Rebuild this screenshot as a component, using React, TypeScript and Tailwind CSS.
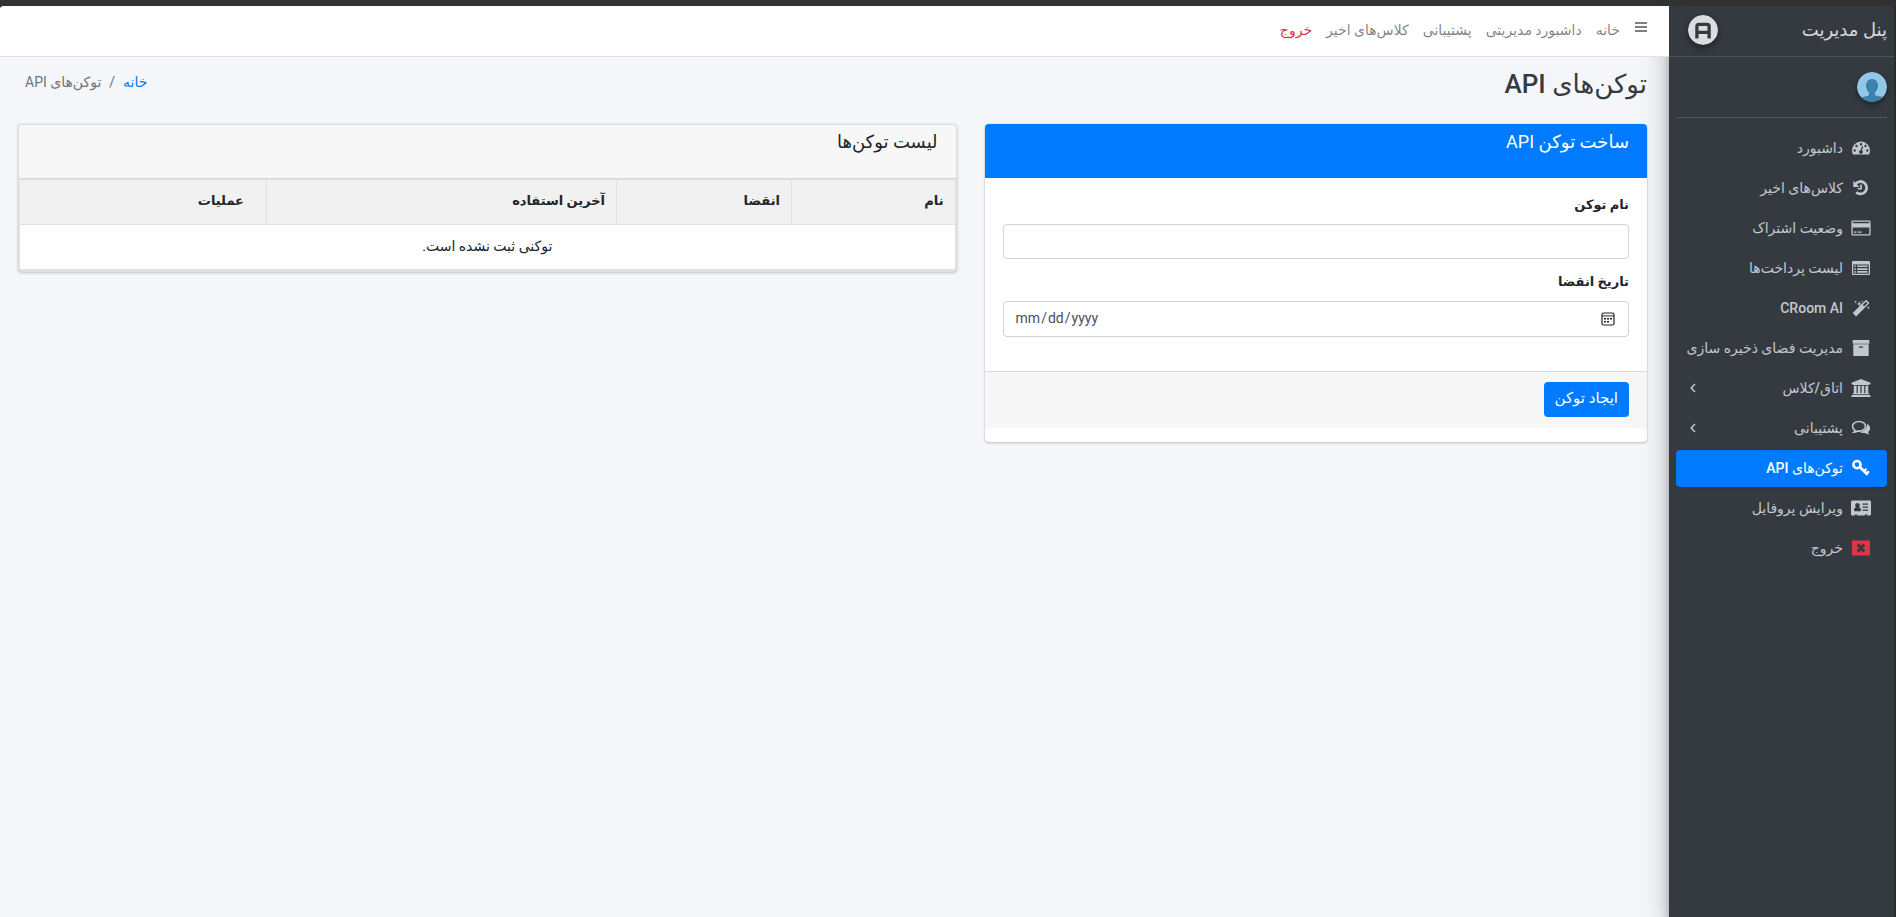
import React from 'react';

interface MenuItem {
  label: string;
  icon: React.ReactNode;
  active?: boolean;
  hasChildren?: boolean;
}

// icons share a 20x18 box and take the colour of the menu link
const icons = {
  dashboard: (
    <path fillRule="evenodd" d="M10 2.500a9 9 0 0 1 9 9c0 1.500-.400 3-1.100 4.100H2.100A8 8 0 0 1 1 11.500a9 9 0 0 1 9-9zM10 4a1.200 1.200 0 1 0 0 2.400A1.200 1.200 0 0 0 10 4zM5.500 5.800a1.200 1.200 0 1 0 0 2.400 1.200 1.200 0 0 0 0-2.400zm9 0a1.200 1.200 0 1 0 0 2.400 1.200 1.200 0 0 0 0-2.400zM3.700 10.300a1.200 1.200 0 1 0 0 2.400 1.200 1.200 0 0 0 0-2.400zm12.600 0a1.200 1.200 0 1 0 0 2.400 1.200 1.200 0 0 0 0-2.400zM10.900 7.200l-1.200 4a1.800 1.800 0 1 0 1.300.400l1.200-4z" />
  ),
  history: (
    <>
      <path d="M4.600 4.900A6.200 6.200 0 1 1 5.200 13.200" fill="none" stroke="currentColor" strokeWidth="2.800" />
      <path d="M2.300 1.700v6.200h6.200zM9.300 5.500h1.600v4.900H6.700V8.900h2.600z" />
    </>
  ),
  card: (
    <path fillRule="evenodd" d="M2 1.500h16c1 0 1.600.600 1.600 1.600v11.800c0 1-.600 1.600-1.600 1.600H2c-1 0-1.600-.600-1.600-1.600V3.100c0-1 .600-1.600 1.600-1.600zM1.700 2.700v1.500h16.600V2.700zM1.700 8.500v6.700h16.600V8.500zM3 12.500h2.500v1.300H3zm3.800 0h3.500v1.300H6.800z" />
  ),
  list: (
    <path fillRule="evenodd" d="M2.500 2h15c1 0 1.500.500 1.500 1.500v11c0 1-.500 1.500-1.500 1.500h-15c-1 0-1.500-.500-1.500-1.500v-11C1 2.500 1.500 2 2.500 2zM2.300 5.500v9.200h15.400V5.500zM3.500 6.500h1.400v1.600H3.500zm2.600 0h10.400v1.600H6.100zM3.500 9.300h1.400v1.600H3.500zm2.600 0h10.400v1.600H6.100zM3.500 12.100h1.400v1.600H3.500zm2.600 0h10.400v1.600H6.100z" />
  ),
  magic: (
    <path fillRule="evenodd" d="M15.600 1.200l2.400 2.400c.300.300.300.700 0 1L5.600 17c-.300.300-.700.300-1 0l-2.400-2.400c-.300-.300-.300-.700 0-1L14.600 1.200c.300-.300.700-.300 1 0zm-.500 1.500L11.800 6l1.400 1.400 3.300-3.300zM4.600 1.200l.400 1.300 1.300.400-1.300.400-.400 1.300-.400-1.300-1.300-.400 1.300-.400zM8.300 2l.700 2.200 2.200.700L9 5.600l-.700 2.200-.700-2.200-2.200-.700 2.200-.700zM11.300 1.200l.300 1 1 .300-1 .300-.300 1-.300-1-1-.300 1-.300zM17.300 7l.400 1.300 1.300.400-1.300.400-.400 1.300-.400-1.300-1.300-.400 1.300-.400z" />
  ),
  archive: (
    <path fillRule="evenodd" d="M2.200 1h15.600c.300 0 .500.200.500.500v3.200H1.700V1.500c0-.300.200-.500.500-.500zM2.300 5.300h15.400v10.900c0 .400-.300.700-.700.700H3c-.400 0-.700-.300-.700-.700zM8.500 7.500a.500.500 0 0 0 0 1.300h3a.500.500 0 0 0 0-1.300z" />
  ),
  bank: (
    <path d="M10 0l9.500 3.800v1.400h-1.300v.900H1.800v-.900H.500V3.800zM2.800 6.800h2.800v7.200h1.200V6.800h2.600v7.200h1.200V6.800h2.600v7.200h1.200V6.800h2.800v7.200h1v1.200H1.800V14h1zM1.200 15.900h17.600l.700.700V18H.500v-1.400z" />
  ),
  comments: (
    <>
      <path d="M8 2.500c3.700 0 6.500 2.100 6.500 4.800S11.700 12.100 8 12.100l-1.500-.100c-1 .700-2.200 1.200-3.600 1.300.600-.600 1-1.300 1.100-2.100C2.500 10.300 1.500 8.900 1.500 7.300c0-2.700 2.800-4.800 6.500-4.800z" fill="none" stroke="currentColor" strokeWidth="1.600" />
      <path d="M16 5c2 .900 3.200 2.500 3.200 4.200 0 1.500-.800 2.800-2.200 3.700.200.900.700 1.700 1.400 2.400-1.700 0-3-.500-4.200-1.400-2 .300-4.200 0-5.900-.900C13 12.700 16.300 9.500 16 5z" />
    </>
  ),
  key: (
    <g fill="none" stroke="currentColor">
      <circle cx="6" cy="5.600" r="3.600" strokeWidth="2.600" />
      <path d="M8.500 7.800l8.200 8" strokeWidth="2.800" />
      <path d="M13 12.200l2.400-2.400M15.600 14.600l2.300-2.300" strokeWidth="2.200" />
    </g>
  ),
  profile: (
    <path fillRule="evenodd" d="M1.500 1.500h17c.900 0 1.500.600 1.500 1.500v12c0 .900-.600 1.500-1.500 1.500h-2.300v-1h-2.400v1H6.200v-1H3.800v1H1.500C.600 16.500 0 15.900 0 15V3c0-.900.600-1.500 1.500-1.500zM6.500 4a2.300 2.300 0 0 0-1.300 4.200C3.700 8.500 3 9.700 3 11.300c0 .500.300.900.900.900h5.200c.600 0 .900-.400.900-.900 0-1.600-.700-2.800-2.200-3.100A2.300 2.300 0 0 0 6.500 4zM11.500 4.500v1.200H17V4.500zm0 3v1.200H17V7.500zm0 3v1.200H17v-1.200z" />
  ),
  close: (
    <path fill="#dc3545" fillRule="evenodd" d="M2 1.500h16c.600 0 1 .400 1 1v13c0 .600-.400 1-1 1H2c-.600 0-1-.400-1-1v-13c0-.600.400-1 1-1zM7.800 4.500L5.700 6.600 8.100 9l-2.400 2.400 2.100 2.100 2.200-2.300 2.200 2.300 2.100-2.100L11.900 9l2.400-2.400-2.100-2.100L10 6.800z" />
  ),
};

const menuItems: MenuItem[] = [
  { label: 'داشبورد', icon: icons.dashboard },
  { label: 'کلاس‌های اخیر', icon: icons.history },
  { label: 'وضعیت اشتراک', icon: icons.card },
  { label: 'لیست پرداخت‌ها', icon: icons.list },
  { label: 'CRoom AI', icon: icons.magic },
  { label: 'مدیریت فضای ذخیره سازی', icon: icons.archive },
  { label: 'اتاق/کلاس', icon: icons.bank, hasChildren: true },
  { label: 'پشتیبانی', icon: icons.comments, hasChildren: true },
  { label: 'توکن‌های API', icon: icons.key, active: true },
  { label: 'ویرایش پروفایل', icon: icons.profile },
  { label: 'خروج', icon: icons.close },
];

const navLinks = ['خانه', 'داشبورد مدیریتی', 'پشتیبانی', 'کلاس‌های اخیر'];

const Sidebar = () => (
  <aside className="relative z-10 flex w-[227px] shrink-0 flex-col border-r-2 border-[#2b2b29] bg-[#343a40] text-[#c2c7d0] shadow-[0_12px_26px_rgba(0,0,0,0.25),0_9px_9px_rgba(0,0,0,0.22)]">
    <a href="#" className="flex h-[51px] items-center justify-between border-b border-[#4b545c] pr-[7px] pb-0.5 pl-[19px] text-lg text-white/80">
      <span>پنل مدیریت</span>
      <svg viewBox="0 0 32 32" className="size-[30px] rounded-full shadow-[0_3px_6px_rgba(0,0,0,0.4)]">
        <circle cx="16" cy="16" r="16" fill="#dcdcde" />
        <path d="M9.500 25V12a2 2 0 0 1 2-2h9a2 2 0 0 1 2 2v13M9.500 18.500h13" fill="none" stroke="#343a40" strokeWidth="3.500" />
      </svg>
    </a>
    <div className="mx-[7px] flex h-[61px] items-center border-b border-[#4f5962]">
      <svg viewBox="0 0 30 30" className="size-[30px] rounded-full shadow-[0_3px_6px_rgba(0,0,0,0.4)]">
        <circle cx="15" cy="15" r="15" fill="#93c7ea" />
        <path d="M15 7c-4 0-6 3-6 7 0 3 1.500 5 3 6.500V23c-2 1.500-6 1.500-8 2.500A15 15 0 0 0 26 25c-2-.800-6-.800-8-2v-2.500c1.500-1.500 3-3.500 3-6.500 0-4-2-7-6-7z" fill="#3e80ad" />
      </svg>
    </div>
    <nav className="mt-3 flex flex-col gap-[3px] px-[7px]">
      {menuItems.map(({ label, icon, active, hasChildren }) => (
        <a
          key={label}
          href="#"
          className={`flex h-[37px] items-center rounded pr-4 pb-0.5 pl-[14px] text-sm font-medium whitespace-nowrap ${active ? 'bg-[#007bff] text-white shadow' : ''}`}
        >
          <svg viewBox="0 0 20 18" fill="currentColor" className="ml-2 h-[18px] w-5 shrink-0">{icon}</svg>
          <span>{label}</span>
          {hasChildren && (
            <svg viewBox="0 0 6 10" fill="none" stroke="currentColor" strokeWidth="1.500" className="mr-auto h-2.5 w-1.5">
              <path d="M5 1L1.200 5L5 9" />
            </svg>
          )}
        </a>
      ))}
    </nav>
  </aside>
);

const TokenForm = () => (
  <form className="rounded bg-white pb-[14px] shadow-[0_0_1px_rgba(0,0,0,0.3),0_1px_3px_rgba(0,0,0,0.2)]">
    <h3 className="h-[54px] rounded-t bg-[#007bff] px-[18px] pt-1.5 text-lg leading-6 text-white">ساخت توکن API</h3>
    <div className="flex flex-col px-[18px] pt-4 pb-[34px]">
      <label htmlFor="token-name" className="mb-2 text-[13px] leading-[22px] font-bold">نام توکن</label>
      <input id="token-name" type="text" className="h-[35px] rounded border border-[#ced4da] px-[11px] text-sm" />
      <label htmlFor="expires-at" className="mt-3 mb-2 text-[13px] leading-[22px] font-bold">تاریخ انقضا</label>
      <div className="relative">
        <input
          id="expires-at"
          type="date"
          dir="ltr"
          lang="en-US"
          className="h-9 w-full rounded border border-[#ced4da] px-[11px] pb-0.5 text-sm text-[#495057] [&::-webkit-calendar-picker-indicator]:opacity-0"
        />
        <svg viewBox="0 0 14 14" className="pointer-events-none absolute top-[11px] right-[14px] size-[14px]">
          <rect x="1" y="1" width="12" height="12" rx="1.500" fill="none" stroke="#212529" strokeWidth="1.200" />
          <path d="M1 3.900h12" stroke="#212529" />
          <path d="M6 6h2v1.600H6zM9 6h2v1.600H9zM3 6h2v1.600H3zM3 9h2v1.600H3zM6 9h2v1.600H6z" fill="#212529" />
        </svg>
      </div>
    </div>
    <div className="flex h-[57px] items-center border-t border-[#d9d9d9] bg-[#f7f7f7] px-[18px] pb-0.5">
      <button type="submit" className="h-[35px] rounded bg-[#007bff] px-[11px] pb-0.5 text-[15px] text-white">ایجاد توکن</button>
    </div>
  </form>
);

const TokenList = () => (
  <section className="rounded border border-[#dedfe2] bg-white shadow-[0_0_1px_rgba(0,0,0,0.13),0_1px_3px_rgba(0,0,0,0.2)]">
    <h3 className="h-[54px] rounded-t border-b border-[#d9d9d9] bg-[#f7f7f7] px-[18px] pt-[5px] text-lg leading-6">لیست توکن‌ها</h3>
    <table className="w-full border border-b-2 border-[#dee2e6] text-sm">
      <thead className="text-[13px]">
        <tr className="h-[45px] border-b border-[#dee2e6] bg-[#f1f1f1] text-right">
          <th className="px-[11px] pb-0.5">نام</th>
          <th className="w-[175px] border-r border-[#dee2e6] px-[11px] pb-0.5">انقضا</th>
          <th className="w-[350px] border-r border-[#dee2e6] px-[11px] pb-0.5">آخرین استفاده</th>
          <th className="w-[247px] border-r border-[#dee2e6] px-[22px] pb-0.5">عملیات</th>
        </tr>
      </thead>
      <tbody>
        <tr className="h-[45px] text-center">
          <td colSpan={4} className="pb-0.5">توکنی ثبت نشده است.</td>
        </tr>
      </tbody>
    </table>
  </section>
);

export default function App() {
  return (
    <div dir="rtl" className="flex min-h-screen flex-col bg-[#333333] font-['Roboto','DejaVu_Sans',sans-serif] text-[#212529]">
      <div className="flex grow pt-1.5">
        <Sidebar />
        <div className="flex grow flex-col rounded-tl bg-[#f4f6f9]">
          <header className="z-20 flex h-[51px] items-center rounded-tl border-b border-[#dee2e6] bg-white px-[22px] pb-0.5 text-sm text-black/50">
            <button type="button" aria-label="منو" className="mb-1.5">
              <svg viewBox="0 0 12 10" fill="currentColor" className="h-2.5 w-3">
                <path d="M0 0h12v2H0zM0 4h12v2H0zM0 8h12v2H0z" />
              </svg>
            </button>
            <nav className="mr-[15px] flex gap-[14px]">
              {navLinks.map((link) => (
                <a key={link} href="#">{link}</a>
              ))}
              <a href="#" className="text-[#dc3545]">خروج</a>
            </nav>
          </header>
          <main className="px-[18px]">
            <div className="mr-1 flex h-[67px] items-start justify-between pt-[7px]">
              <h1 className="text-[26px] leading-10 font-medium text-[#343a40]">توکن‌های API</h1>
              <nav className="flex gap-2 px-[7px] text-sm leading-9 text-[#6c757d]">
                <a href="#" className="text-[#007bff]">خانه</a>
                <span>/</span>
                <span>توکن‌های API</span>
              </nav>
            </div>
            <div className="mr-1 grid grid-cols-12 items-start gap-7">
              <div className="col-span-5">
                <TokenForm />
              </div>
              <div className="col-span-7">
                <TokenList />
              </div>
            </div>
          </main>
        </div>
      </div>
    </div>
  );
}
